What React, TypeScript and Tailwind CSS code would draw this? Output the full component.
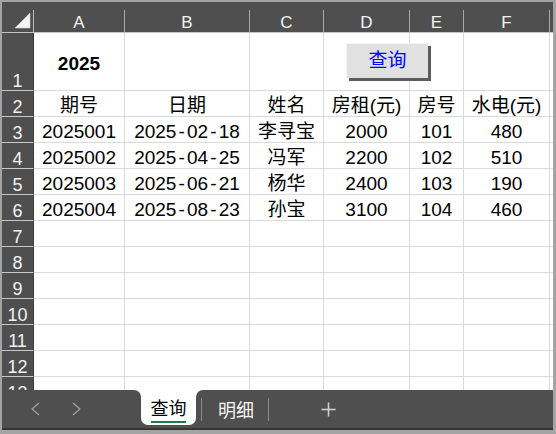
import React from "react";

const COLS = [
  { label: "A", w: "w-[91px]" },
  { label: "B", w: "w-[125px]" },
  { label: "C", w: "w-[74px]" },
  { label: "D", w: "w-[86px]" },
  { label: "E", w: "w-[54px]" },
  { label: "F", w: "w-[86px]" },
];

function DateText({ v }: { v: string }) {
  const parts = v.split("-");
  return (
    <span>
      {parts.map((p, i) => (
        <React.Fragment key={i}>
          {i > 0 && <span className="inline-block w-[10.57px] text-center">-</span>}
          {p}
        </React.Fragment>
      ))}
    </span>
  );
}

const DATA: string[][] = [
  ["2025001", "2025-02-18", "李寻宝", "2000", "101", "480"],
  ["2025002", "2025-04-25", "冯军", "2200", "102", "510"],
  ["2025003", "2025-06-21", "杨华", "2400", "103", "190"],
  ["2025004", "2025-08-23", "孙宝", "3100", "104", "460"],
];

const HEAD = ["期号", "日期", "姓名", "房租(元)", "房号", "水电(元)"];

function RowHeader({ n }: { n: number }) {
  return (
    <div className="w-[32px] shrink-0 bg-[#4f4f4f] border-b border-b-[#c8c8c8] border-r border-r-[#3a3a3a] flex items-end justify-center text-[18px] leading-[17px] text-[#f2f2f2]">
      {n}
    </div>
  );
}

function Row({
  n,
  cells,
  h,
  extra,
}: {
  n: number;
  cells: React.ReactNode[];
  h: string;
  extra?: React.ReactNode;
}) {
  return (
    <div className={`relative flex shrink-0 ${h}`}>
      <RowHeader n={n} />
      {COLS.map((c, i) => (
        <div
          key={i}
          className={`${c.w} shrink-0 bg-white border-r border-b border-[#dadada] flex items-end justify-center text-[19px] leading-[20px] text-black whitespace-nowrap overflow-hidden`}
        >
          {cells[i]}
        </div>
      ))}
      <div className="flex-1 bg-white border-b border-[#dadada]" />
      {extra}
    </div>
  );
}

function Chevron({ dir }: { dir: "l" | "r" }) {
  return (
    <svg width="9" height="14" viewBox="0 0 9 14">
      {dir === "l" ? (
        <polyline points="8,1 1,7 8,13" fill="none" stroke="#a0a0a0" strokeWidth="1.2" />
      ) : (
        <polyline points="1,1 8,7 1,13" fill="none" stroke="#a0a0a0" strokeWidth="1.2" />
      )}
    </svg>
  );
}

export default function App() {
  const emptyRows = [7, 8, 9, 10, 11, 12, 13];
  return (
    <div className="w-[556px] h-[434px] bg-[#a4a4a4] pt-[2px] pl-[2px] pr-[3px] pb-[4px] font-['Liberation_Sans','Noto_Sans_CJK_SC',sans-serif] overflow-hidden">
      <div className="w-full h-full flex flex-col bg-white">
        {/* column header */}
        <div className="h-[31px] shrink-0 flex bg-[#4f4f4f] border-b border-[#c4c4c4]">
          <div className="w-[32px] shrink-0 flex">
            <div className="flex-1">
              <svg width="31" height="30" viewBox="0 0 31 30">
                <polygon points="13,26 28,26 28,11" fill="#f4f4f4" stroke="#cfcfcf" strokeWidth="0.6" />
              </svg>
            </div>
            <div className="w-px h-[22px] self-end bg-[#bdbdbd]" />
          </div>
          {COLS.map((c) => (
            <div key={c.label} className={`${c.w} shrink-0 flex`}>
              <div className="flex-1 flex items-end justify-center pb-[1px] text-[17px] leading-[17px] text-[#f2f2f2]">
                {c.label}
              </div>
              <div className="w-px h-[22px] self-end bg-[#a8a8a8]" />
            </div>
          ))}
          <div className="flex-1" />
        </div>

        {/* grid */}
        <div className="h-[357px] shrink-0 overflow-hidden flex flex-col">
          <Row
            n={1}
            h="h-[58px]"
            cells={[
              <span className="font-bold pb-[16px]">2025</span>,
              "",
              "",
              "",
              "",
              "",
            ]}
            extra={
              <div className="absolute left-[344px] top-[10px] w-[82px] h-[35px] bg-[#e1e1e1] border-t border-l border-[#f6f6f6] shadow-[3px_3px_0_#5c5c5c] flex items-center justify-center text-[19px] leading-[22px] text-[#0000ff]">
                查询
              </div>
            }
          />
          <Row n={2} h="h-[26px]" cells={HEAD} />
          {DATA.map((r, i) => (
            <Row
              key={i}
              n={i + 3}
              h="h-[26px]"
              cells={r.map((v, j) => (j === 1 ? <DateText v={v} /> : v))}
            />
          ))}
          {emptyRows.map((n) => (
            <Row key={n} n={n} h="h-[26px]" cells={["", "", "", "", "", ""]} />
          ))}
        </div>

        {/* sheet tab bar */}
        <div className="h-[38px] shrink-0 flex">
          <div className="bg-white">
            <div className="w-[139px] h-full bg-[#4f4f4f] rounded-tr-[7px] flex items-center pl-[29px] gap-[32px]">
              <Chevron dir="l" />
              <Chevron dir="r" />
            </div>
          </div>
          <div className="bg-[#4f4f4f]">
            <div className="w-[55px] h-[35px] bg-white rounded-b-[7px] flex flex-col items-center pt-[6px]">
              <div className="text-[18px] leading-[22px] text-black font-['Noto_Sans_CJK_SC',sans-serif]">查询</div>
              <div className="mt-[3px] w-[35px] h-[2px] bg-[#1f7a45]" />
            </div>
          </div>
          <div className="flex-1 bg-white">
            <div className="h-full bg-[#4f4f4f] rounded-tl-[7px] flex items-center">
              <div className="ml-[5px] w-px h-[23px] bg-[#8a8a8a]" />
              <div className="ml-[16px] text-[18px] leading-[22px] text-[#f4f4f4] font-['Noto_Sans_CJK_SC',sans-serif]">明细</div>
              <div className="ml-[14px] w-px h-[23px] bg-[#8a8a8a]" />
              <div className="ml-[52px]">
                <svg width="15" height="15" viewBox="0 0 15 15">
                  <line x1="7.5" y1="0.5" x2="7.5" y2="14.5" stroke="#d0d0d0" strokeWidth="1.6" />
                  <line x1="0.5" y1="7.5" x2="14.5" y2="7.5" stroke="#d0d0d0" strokeWidth="1.6" />
                </svg>
              </div>
            </div>
          </div>
        </div>
        <div className="h-[2px] shrink-0 bg-[#363636]" />
      </div>
    </div>
  );
}
